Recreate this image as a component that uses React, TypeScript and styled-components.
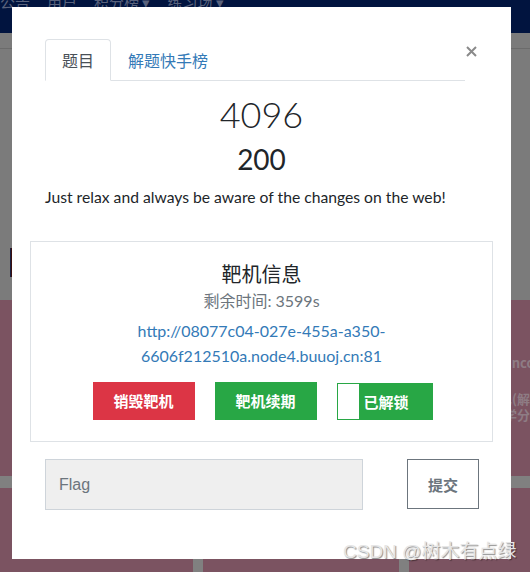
import React from 'react';
import styled, { createGlobalStyle } from 'styled-components';

const GlobalStyle = createGlobalStyle`
  html, body {
    margin: 0;
    padding: 0;
    width: 530px;
    height: 572px;
    overflow: hidden;
    background: #7a7a7a;
    font-family: Lato, 'Noto Sans CJK SC', sans-serif;
  }
`;

const Page = styled.div`
  position: relative;
  width: 530px;
  height: 572px;
  overflow: hidden;
`;

// page behind the dialog, already darkened by the backdrop
const NavBar = styled.div`
  height: 33px;
  background: #01143f;
  display: flex;
  gap: 17px;
  overflow: hidden;
`;

const NavItem = styled.span`
  margin-top: -6px;
  font: 15px/15px 'Noto Sans CJK SC', sans-serif;
  color: #59627c;
  white-space: nowrap;
`;

const SubBar = styled.div`
  height: 15px;
  border-bottom: 1px solid #6b6b6b;
  background: #7b7b7b;
`;

const Banner = styled.div`
  height: 251px;
  background: #7b7b7b;
  padding-top: 199px;
  box-sizing: border-box;
`;

const Heading = styled.div`
  margin-left: 10px;
  width: 3px;
  height: 29px;
  background: #3a1010;
  border-left: 1px solid #1a2040;
`;

const CardGrid = styled.div`
  display: grid;
  grid-template-columns: repeat(3, 196px);
  grid-auto-rows: 176px;
  column-gap: 10px;
  row-gap: 12px;
  margin-left: -3px;
  background: #808080;
`;

const ChallengeCard = styled.div`
  background: #7b5361;
  padding-top: 55px;
  box-sizing: border-box;
  color: #8e7c84;
  font: bold 13px/16px 'Noto Sans CJK SC', sans-serif;
`;

const CardLine = styled.div<{ $indent: number; $gap?: number }>`
  margin: ${p => p.$gap ?? 0}px 0 0 ${p => p.$indent}px;
  height: 16px;
  white-space: nowrap;
`;

// dialog
const Modal = styled.div`
  position: absolute;
  top: 7px;
  left: 12px;
  width: 499px;
  background: #fff;
  box-sizing: border-box;
  padding: 32px 18px 49px;
`;

const Header = styled.div`
  display: flex;
  padding: 0 16px 0 15px;
`;

const Tabs = styled.div`
  flex: 1;
  display: flex;
  border-bottom: 1px solid #dee2e6;
`;

const Tab = styled.div<{ $active?: boolean }>`
  padding: 8px 16px;
  margin-bottom: -1px;
  font: 16px/24px 'Noto Sans CJK SC', sans-serif;
  color: ${p => (p.$active ? '#495057' : '#337ab7')};
  border: 1px solid ${p => (p.$active ? '#dee2e6' : 'transparent')};
  border-bottom-color: ${p => (p.$active ? '#fff' : 'transparent')};
  border-radius: 4px 4px 0 0;
  background: ${p => (p.$active ? '#fff' : 'transparent')};
`;

const CloseBtn = styled.button`
  border: 0;
  background: none;
  padding: 0;
  margin: 7px 0 0 1px;
  width: 11px;
  height: 11px;
  display: flex;
  cursor: pointer;
`;

const Score = styled.div`
  margin-top: 12px;
  text-align: center;
  font: 300 36px/43px Lato, sans-serif;
  color: #212529;
`;

const Points = styled.div`
  margin-top: 6px;
  text-align: center;
  font: 28px/34px Lato, sans-serif;
  color: #212529;
`;

const Description = styled.p`
  margin: 9px 0 0 15px;
  font: 15.7px/24px Lato, sans-serif;
  color: #212529;
`;

const InfoCard = styled.div`
  margin-top: 32px;
  border: 1px solid #dee2e6;
  padding: 20px 0 21px;
  text-align: center;
`;

const InfoTitle = styled.div`
  font: 20px/24px Lato, 'Noto Sans CJK SC', sans-serif;
  color: #212529;
`;

const TimeLeft = styled.div`
  margin-top: 3px;
  font: 16px/24px Lato, 'Noto Sans CJK SC', sans-serif;
  color: #6c757d;
`;

const HostLink = styled.a`
  display: block;
  margin: 5px auto 0;
  width: 250px;
  font: 16px/25px Lato, sans-serif;
  color: #337ab7;
  text-decoration: none;
`;

const Actions = styled.div`
  display: flex;
  justify-content: center;
  align-items: flex-start;
  gap: 20px;
  margin-top: 14px;
  padding-left: 2px;
`;

const ActionBtn = styled.button<{ $color: string }>`
  width: 102px;
  height: 38px;
  border: 0;
  border-radius: 0;
  background: ${p => p.$color};
  color: #fff;
  font: bold 15px/38px 'Noto Sans CJK SC', sans-serif;
  padding: 0;
  cursor: pointer;
`;

const Toggle = styled.div`
  width: 96px;
  height: 37px;
  margin-top: 1px;
  box-sizing: border-box;
  border: 1px solid #28a745;
  background: #28a745;
  display: flex;
`;

const ToggleHandle = styled.span`
  width: 21px;
  background: #fff;
`;

const ToggleLabel = styled.span`
  flex: 1;
  padding-right: 18px;
  text-align: center;
  color: #fff;
  font: bold 15px/35px 'Noto Sans CJK SC', sans-serif;
`;

const FlagRow = styled.div`
  display: flex;
  align-items: flex-start;
  gap: 44px;
  margin-top: 17px;
  padding-left: 15px;
`;

const FlagInput = styled.input`
  width: 318px;
  height: 51px;
  box-sizing: border-box;
  border: 1px solid #ced4da;
  background: #efefef;
  padding: 0 13px;
  font: 16px 'Liberation Sans', Arial, sans-serif;
  color: #495057;
  outline: none;
  &::placeholder {
    color: #6c757d;
  }
`;

const SubmitBtn = styled.button`
  width: 72px;
  height: 50px;
  border: 1px solid #6c757d;
  background: #fff;
  color: #6c757d;
  font: bold 15px 'Noto Sans CJK SC', sans-serif;
  padding: 0;
  cursor: pointer;
`;

const Watermark = styled.div`
  position: absolute;
  left: 343px;
  top: 540px;
  font: 19px/24px 'Liberation Sans', 'Noto Sans CJK SC', sans-serif;
  color: #e6e6e6;
  text-shadow: 1px 1px 1px rgba(0, 0, 0, 0.45);
  white-space: nowrap;
  pointer-events: none;
`;

const CloseIcon = () => (
  <svg width="11" height="11" viewBox="0 0 11 11">
    <path d="M1 1L10 10M10 1L1 10" stroke="#8a8a8a" strokeWidth="2" />
  </svg>
);

const App = () => {
  const navItems = ['公告', '用户', '积分榜 ▾', '练习场 ▾'];

  return (
    <Page>
      <GlobalStyle />
      <NavBar>
        {navItems.map(item => (
          <NavItem key={item}>{item}</NavItem>
        ))}
      </NavBar>
      <SubBar />
      <Banner>
        <Heading />
      </Banner>
      <CardGrid>
        <ChallengeCard />
        <ChallengeCard />
        <ChallengeCard>
          <CardLine $indent={93}>Unconditional</CardLine>
          <CardLine $indent={90} $gap={20}>已(解</CardLine>
          <CardLine $indent={95}>学分</CardLine>
        </ChallengeCard>
        <ChallengeCard />
        <ChallengeCard />
        <ChallengeCard />
      </CardGrid>

      <Modal>
        <Header>
          <Tabs>
            <Tab $active>题目</Tab>
            <Tab>解题快手榜</Tab>
          </Tabs>
          <CloseBtn aria-label="close">
            <CloseIcon />
          </CloseBtn>
        </Header>

        <Score>4096</Score>
        <Points>200</Points>
        <Description>Just relax and always be aware of the changes on the web!</Description>

        <InfoCard>
          <InfoTitle>靶机信息</InfoTitle>
          <TimeLeft>剩余时间: 3599s</TimeLeft>
          <HostLink href="#">http://08077c04-027e-455a-a350-6606f212510a.node4.buuoj.cn:81</HostLink>
          <Actions>
            <ActionBtn $color="#dc3545">销毁靶机</ActionBtn>
            <ActionBtn $color="#28a745">靶机续期</ActionBtn>
            <Toggle>
              <ToggleHandle />
              <ToggleLabel>已解锁</ToggleLabel>
            </Toggle>
          </Actions>
        </InfoCard>

        <FlagRow>
          <FlagInput placeholder="Flag" />
          <SubmitBtn>提交</SubmitBtn>
        </FlagRow>
      </Modal>

      <Watermark>CSDN @树木有点绿</Watermark>
    </Page>
  );
};

export default App;
